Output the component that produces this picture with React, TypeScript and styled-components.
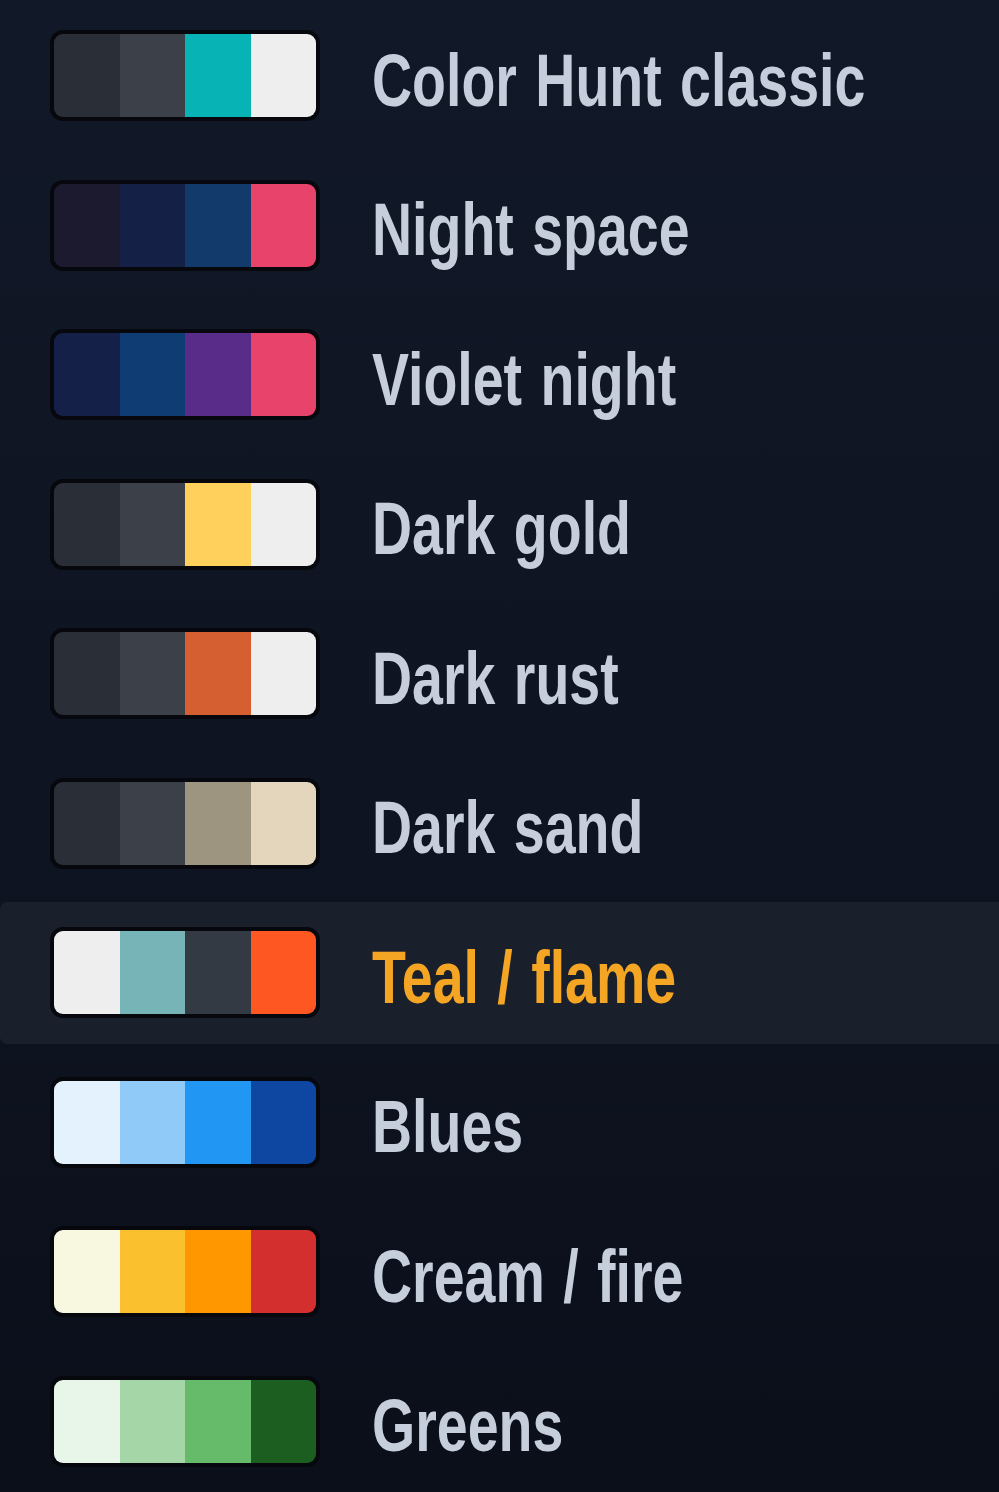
import React from 'react';
import styled, { createGlobalStyle } from 'styled-components';

const Global = createGlobalStyle`
  html, body {
    margin: 0;
    padding: 0;
    background: #0d1320;
  }
`;

type Palette = { name: string; colors: string[] };

const palettes: Palette[] = [
  { name: 'Color Hunt classic', colors: ['#2a2e36', '#3c4048', '#08b3b6', '#eeeeee'] },
  { name: 'Night space', colors: ['#1c1a2e', '#152046', '#123b6c', '#e8436a'] },
  { name: 'Violet night', colors: ['#152049', '#0f3c72', '#5a2c8a', '#e8436a'] },
  { name: 'Dark gold', colors: ['#2a2e36', '#3c4048', '#ffd05c', '#eeeeee'] },
  { name: 'Dark rust', colors: ['#2a2e36', '#3c4048', '#d65f32', '#eeeeee'] },
  { name: 'Dark sand', colors: ['#2a2e36', '#3c4048', '#9e9581', '#e3d6bc'] },
  { name: 'Teal / flame', colors: ['#eeeeee', '#77b4b8', '#333a43', '#ff5722'] },
  { name: 'Blues', colors: ['#e3f2fd', '#90caf9', '#2196f3', '#0d47a1'] },
  { name: 'Cream / fire', colors: ['#f8f7df', '#fbc02d', '#ff9800', '#d32f2f'] },
  { name: 'Greens', colors: ['#e8f5e9', '#a5d6a7', '#66bb6a', '#1b5e20'] },
];

const Page = styled.div`
  width: 999px;
  height: 1492px;
  box-sizing: border-box;
  padding-top: 5px;
  background: linear-gradient(180deg, #111827 0%, #0e1421 55%, #0a0f1a 100%);
  display: flex;
  flex-direction: column;
  gap: 8px;
  overflow: hidden;
`;

const Row = styled.div<{ $active?: boolean }>`
  height: 142px;
  display: flex;
  align-items: center;
  padding-left: 50px;
  gap: 52px;
  border-radius: 7px 0 0 7px;
  background: ${(p) => (p.$active ? '#1a202b' : 'transparent')};
  cursor: pointer;
`;

const Swatch = styled.div`
  width: 270px;
  height: 91px;
  box-sizing: border-box;
  border: 4px solid #06080d;
  border-radius: 13px;
  overflow: hidden;
  display: flex;
  flex-shrink: 0;
`;

const Chip = styled.div<{ $c: string }>`
  flex: 1;
  background: ${(p) => p.$c};
`;

// the reference face is a condensed grotesk; squeeze Liberation Sans to match
const Label = styled.span<{ $active?: boolean }>`
  display: inline-block;
  font-family: "Liberation Sans", Arial, sans-serif;
  font-weight: 700;
  font-size: 74px;
  line-height: 1;
  white-space: nowrap;
  word-spacing: 4px;
  transform: scaleX(0.75);
  transform-origin: left center;
  color: ${(p) => (p.$active ? '#f5a524' : '#c6cddb')};
  padding-top: 10px;
`;

const App: React.FC = () => {
  const active = 'Teal / flame';
  return (
    <>
      <Global />
      <Page>
        {palettes.map((p) => (
          <Row key={p.name} $active={p.name === active}>
            <Swatch>
              {p.colors.map((c, i) => (
                <Chip key={i} $c={c} />
              ))}
            </Swatch>
            <Label $active={p.name === active}>{p.name}</Label>
          </Row>
        ))}
      </Page>
    </>
  );
};

export default App;
